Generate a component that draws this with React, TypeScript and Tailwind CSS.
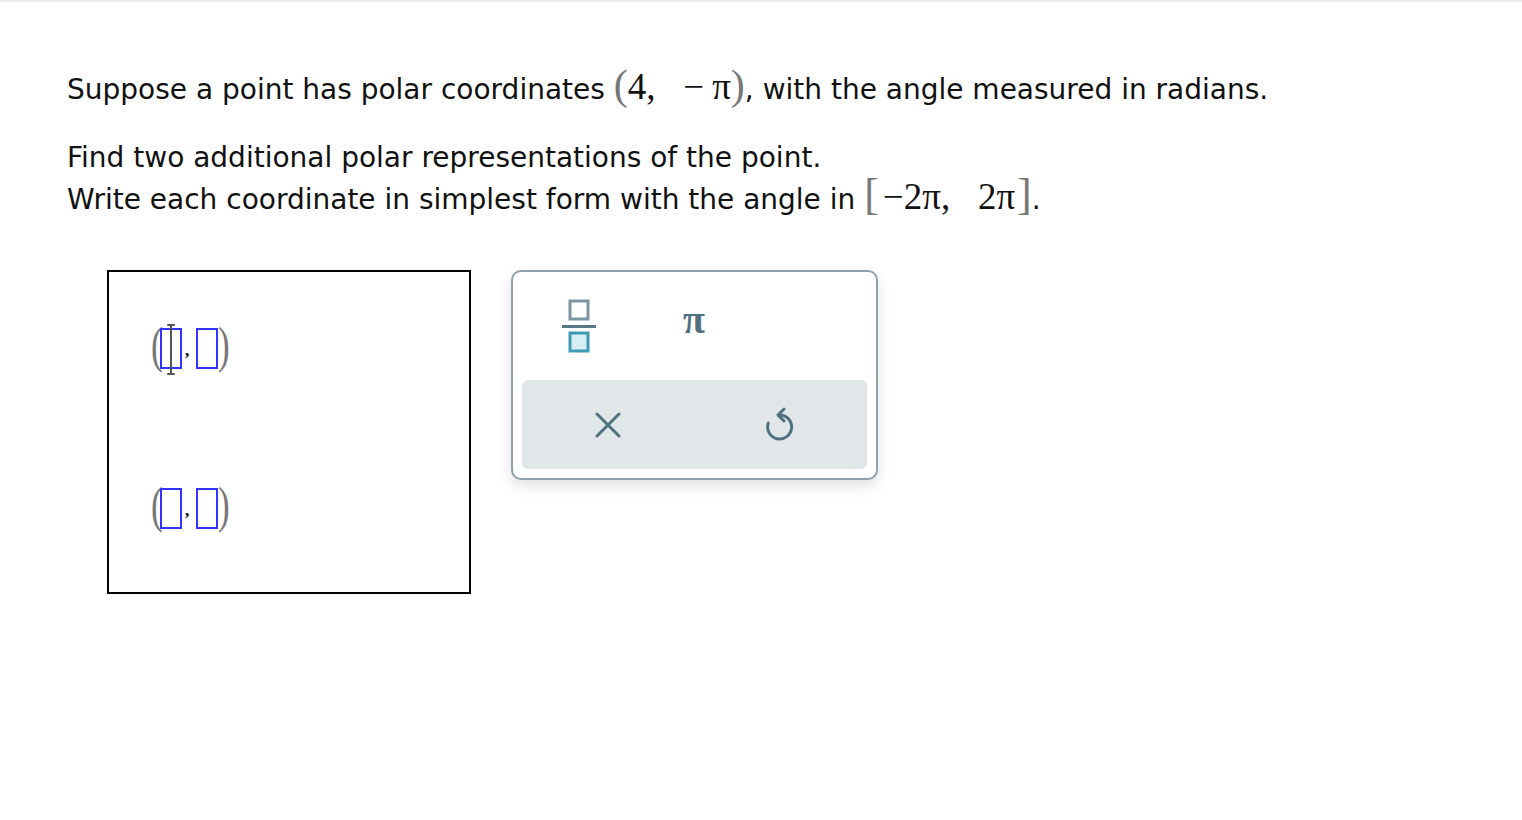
import React from "react";

const serif = { fontFamily: '"Liberation Serif", "Times New Roman", serif' };

function Slot({ cursor }: { cursor?: boolean }) {
  return (
    <span className="relative inline-block w-[22px] h-[41px] border-2 border-[#3333ff]">
      {cursor && (
        <span className="absolute left-[5px] top-[-6px] w-[8px] h-[51px] flex flex-col items-center">
          <span className="w-[8px] h-[2px] bg-[#555] rounded-full" />
          <span className="w-[2px] flex-1 bg-[#555]" />
          <span className="w-[8px] h-[2px] bg-[#555] rounded-full" />
        </span>
      )}
    </span>
  );
}

function Pair({ cursor }: { cursor?: boolean }) {
  return (
    <div className="flex items-center h-[50px]">
      <span className="inline-block w-[13px] text-[50px] leading-none text-[#777] -mt-[6px] scale-x-[0.7] origin-right" style={serif}>(</span>
      <Slot cursor={cursor} />
      <span className="w-[14px] text-[17px] text-black self-end mb-[10px] pl-[3px] font-bold" style={serif}>,</span>
      <Slot />
      <span className="inline-block w-[13px] text-[50px] leading-none text-[#777] -mt-[6px] scale-x-[0.7] origin-left" style={serif}>)</span>
    </div>
  );
}

export default function App() {
  return (
    <div className="min-h-[820px] w-[1522px] bg-white border-t-2 border-[#eeeeee]" style={{ fontFamily: '"DejaVu Sans", Verdana, sans-serif' }}>
      <div className="pl-[67px] pt-[62px] text-[28px] text-[#111]">
        <p className="leading-[52px]">
          Suppose a point has polar coordinates{" "}
          <span className="text-[37px] leading-[0]" style={serif}>
            <span className="text-[#777] text-[42px]">(</span>4,&nbsp;&nbsp;&nbsp;−<span className="ml-[8px]">π</span><span className="text-[#777] text-[42px]">)</span>
          </span>
          , with the angle measured in radians.
        </p>
        <p className="leading-[42px] mt-[21px]">Find two additional polar representations of the point.</p>
        <p className="leading-[42px]">
          Write each coordinate in simplest form with the angle in{" "}
          <span className="text-[37px] leading-[0]" style={serif}>
            <span className="text-[#777] text-[44px] mr-[4px]">[</span>−2π,&nbsp;&nbsp;&nbsp;2π<span className="text-[#777] text-[44px] ml-[2px]">]</span>
          </span>
          .
        </p>
      </div>

      <div className="flex items-start gap-[40px] ml-[107px] mt-[49px]">
        <div className="w-[364px] h-[324px] border-2 border-black pl-[38px] pt-[51px] flex flex-col gap-[110px]">
          <Pair cursor />
          <Pair />
        </div>

        <div className="w-[367px] h-[210px] rounded-[10px] border-2 border-[#8fa1ab] bg-white shadow-[0_6px_14px_rgba(0,0,0,0.12)] p-[9px] flex flex-col">
          <div className="flex h-[99px]">
            <div className="w-[114px] flex items-center justify-center pb-[8px]">
              <svg width="34" height="56" viewBox="0 0 34 56">
                <rect x="8" y="2" width="18" height="18" fill="none" stroke="#7b96a1" strokeWidth="3" />
                <rect x="0" y="26" width="34" height="3" fill="#5b7885" />
                <rect x="8" y="34" width="18" height="18" fill="#d6eef4" stroke="#3e9ab3" strokeWidth="3" />
              </svg>
            </div>
            <div className="w-[118px] flex items-center justify-center text-[40px] font-bold text-[#4f717e] pb-[22px] pr-[2px]" style={serif}>π</div>
          </div>
          <div className="flex-1 bg-[#e1e6e9] rounded-[6px] flex items-center">
            <div className="w-[172px] flex justify-center">
              <svg width="28" height="28" viewBox="0 0 28 28">
                <path d="M3 3 L25 25 M25 3 L3 25" stroke="#4f717e" strokeWidth="3" strokeLinecap="round" />
              </svg>
            </div>
            <div className="w-[172px] flex justify-center">
              <svg width="32" height="38" viewBox="0 0 32 38">
                <path d="M15 9 A12 12 0 1 1 4.3 17" fill="none" stroke="#4f717e" strokeWidth="3" strokeLinecap="round" />
                <path d="M20 3 L14 9 L20 15" fill="none" stroke="#4f717e" strokeWidth="3" strokeLinecap="round" strokeLinejoin="round" />
              </svg>
            </div>
          </div>
        </div>
      </div>
    </div>
  );
}
